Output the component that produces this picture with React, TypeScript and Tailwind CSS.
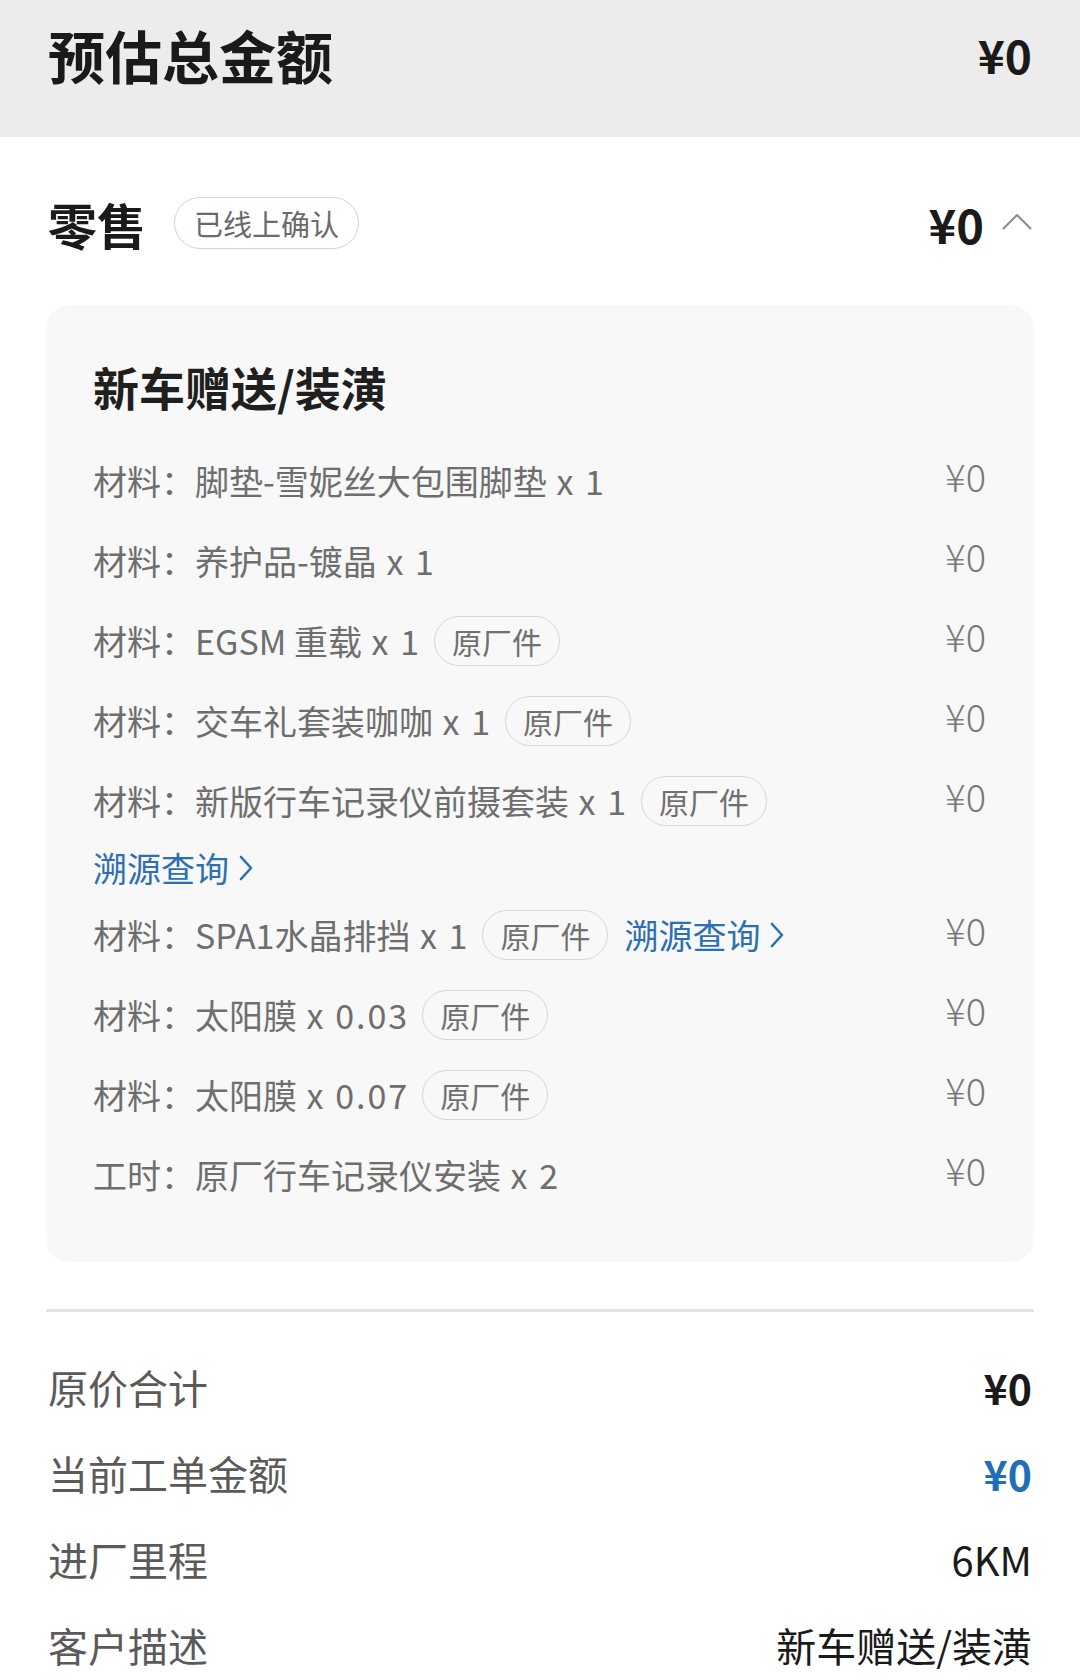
import React from "react";

const Badge = ({ children }: { children: React.ReactNode }) => (
  <span className="inline-flex items-center h-[50px] px-[17px] rounded-full border-[1.5px] border-[#d6d6d6] text-[30px] text-[#707070] leading-none shrink-0">
    {children}
  </span>
);

const TraceLink = () => (
  <span className="inline-flex items-center gap-[10px] text-[34px] text-[#2c6fb3] leading-none shrink-0">
    溯源查询
    <svg width="14" height="26" viewBox="0 0 14 26" fill="none">
      <polyline points="2,2 12,13 2,24" stroke="#2c6fb3" strokeWidth="2.6" strokeLinecap="round" strokeLinejoin="round" />
    </svg>
  </span>
);

type Item = { label: string; name: string; qty: string; badge?: boolean; link?: boolean };

const Row = ({ item }: { item: Item }) => (
  <div className="flex items-center justify-between h-[80px]">
    <div className="flex items-center gap-[13px] text-[34px] text-[#6e6e6e] leading-none">
      <span className="whitespace-nowrap">
        {item.label}：{item.name}
        <span className="tracking-[2px]"> x {item.qty}</span>
      </span>
      {item.badge && <Badge>原厂件</Badge>}
      {item.link && (
        <span className="ml-[3px]">
          <TraceLink />
        </span>
      )}
    </div>
    <span className="text-[38px] text-[#7a7a7a] font-light leading-none mb-[10px]">¥0</span>
  </div>
);

const items1: Item[] = [
  { label: "材料", name: "脚垫-雪妮丝大包围脚垫", qty: "1" },
  { label: "材料", name: "养护品-镀晶", qty: "1" },
  { label: "材料", name: "EGSM 重载", qty: "1", badge: true },
  { label: "材料", name: "交车礼套装咖咖", qty: "1", badge: true },
  { label: "材料", name: "新版行车记录仪前摄套装", qty: "1", badge: true },
];

const items2: Item[] = [
  { label: "材料", name: "SPA1水晶排挡", qty: "1", badge: true, link: true },
  { label: "材料", name: "太阳膜", qty: "0.03", badge: true },
  { label: "材料", name: "太阳膜", qty: "0.07", badge: true },
  { label: "工时", name: "原厂行车记录仪安装", qty: "2" },
];

const SummaryRow = ({ label, children }: { label: string; children: React.ReactNode }) => (
  <div className="flex items-center justify-between h-[86px]">
    <span className="text-[40px] text-[#5a5a5a] leading-none">{label}</span>
    {children}
  </div>
);

export default function App() {
  return (
    <div
      className="w-[1080px] min-h-[1680px] bg-white overflow-hidden"
      style={{ fontFamily: '"Noto Sans CJK SC", "Noto Sans", sans-serif' }}
    >
      {/* Header */}
      <div className="h-[137px] bg-[#ececec] px-[48px] pb-[29px] flex items-center justify-between">
        <span className="text-[57px] font-bold text-[#1a1a1a] leading-none">预估总金额</span>
        <span className="text-[46px] font-bold text-[#1a1a1a] leading-none">¥0</span>
      </div>

      {/* Section header */}
      <div className="h-[168px] pt-[4px] px-[48px] flex items-center justify-between">
        <div className="flex items-center gap-[28px]">
          <span className="text-[49px] font-bold text-[#1a1a1a] leading-none">零售</span>
          <span className="inline-flex items-center h-[52px] px-[19px] rounded-full border-[1.5px] border-[#d4d4d4] text-[29px] text-[#6a6a6a] leading-none">
            已线上确认
          </span>
        </div>
        <div className="flex items-center gap-[18px]">
          <span className="text-[47px] font-bold text-[#1a1a1a] leading-none">¥0</span>
          <svg width="30" height="17" viewBox="0 0 30 17" fill="none" className="mb-[4px]">
            <polyline points="1.5,15.5 15,2 28.5,15.5" stroke="#8a8a8a" strokeWidth="2" strokeLinecap="round" strokeLinejoin="round" />
          </svg>
        </div>
      </div>

      {/* Card */}
      <div className="mx-[46px] rounded-[24px] bg-[#f8f8f8] pt-[51px] pb-[47px] pl-[47px] pr-[48px]">
        <div className="h-[60px] flex items-center mb-[25px]">
          <span className="text-[46px] font-bold text-[#1f1f1f] leading-none">新车赠送/装潢</span>
        </div>
        {items1.map((it, i) => (
          <Row key={"a" + i} item={it} />
        ))}
        <div className="h-[54px] flex items-center">
          <TraceLink />
        </div>
        {items2.map((it, i) => (
          <Row key={"b" + i} item={it} />
        ))}
      </div>

      {/* Divider */}
      <div className="mx-[46px] mt-[47px] h-[3px] bg-[#e3e3e3]" />

      {/* Summary */}
      <div className="px-[48px] mt-[32px]">
        <SummaryRow label="原价合计">
          <span className="text-[41px] font-bold text-[#1a1a1a] leading-none">¥0</span>
        </SummaryRow>
        <SummaryRow label="当前工单金额">
          <span className="text-[41px] font-bold text-[#1f6fb8] leading-none">¥0</span>
        </SummaryRow>
        <SummaryRow label="进厂里程">
          <span className="text-[40px] text-[#1a1a1a] leading-none">6KM</span>
        </SummaryRow>
        <SummaryRow label="客户描述">
          <span className="text-[40px] text-[#1a1a1a] leading-none">新车赠送/装潢</span>
        </SummaryRow>
      </div>
    </div>
  );
}
